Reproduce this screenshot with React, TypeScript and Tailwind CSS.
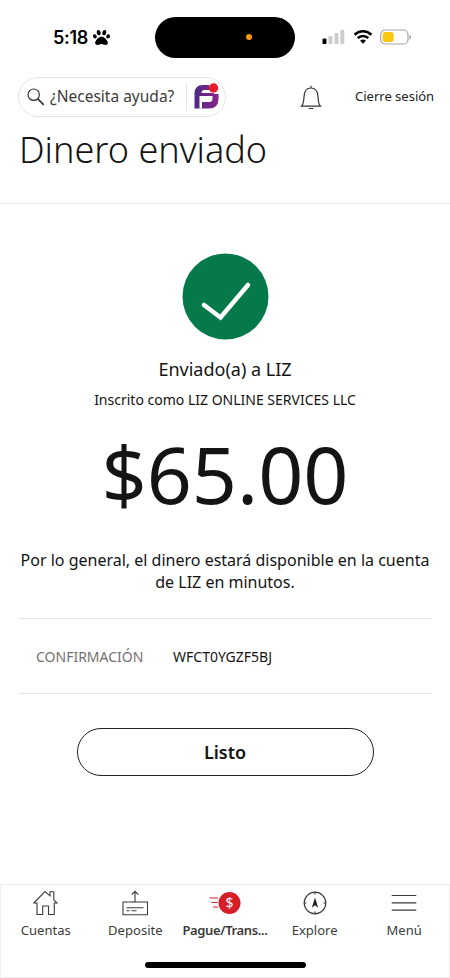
import React from "react";
import { FaPaw } from "react-icons/fa";

interface INavItem {
  label: string;
  icon: React.ReactNode;
  className: string;
}

const HomeIcon = () => (
  <svg width="26" height="26" viewBox="0 0 26 26" fill="none" stroke="#3b3b3b" strokeWidth="1.1">
    <path d="M4 13v11.5h5.700v-8.500h5.800v8.500h5.800v-11.500h2.700l-3.200-3.200v-8h-3.800v4l-5-4.300-11.200 11.500z" />
  </svg>
);

const DepositIcon = () => (
  <svg width="26" height="26" viewBox="0 0 26 26" fill="none" stroke="#3b3b3b" strokeWidth="1.1">
    <path d="M10.500 12h-9.500v12.700h24.500v-12.700h-9.500" />
    <path d="M10 12h6" />
    <path d="M13 12V1.500M9.700 4.700L13 1.300l3.300 3.400M4.500 17.700h17M4.500 20.800h3M9.500 20.800h5" />
  </svg>
);

const PayIcon = () => (
  <svg width="32" height="26" viewBox="0 0 32 26">
    <circle cx="20.500" cy="13" r="11" fill="#d71e28" />
    <path d="M0.500 8h8.500M2.500 12.500h6M4 17h5" stroke="#d71e28" strokeWidth="1.100" />
    <text x="20.500" y="18" fill="#fff" fontSize="14" textAnchor="middle" fontFamily="Noto Sans">$</text>
  </svg>
);

const CompassIcon = () => (
  <svg width="26" height="26" viewBox="0 0 26 26" fill="none" stroke="#3b3b3b" strokeWidth="1.200">
    <circle cx="13" cy="13" r="10.800" />
    <path d="M13 2v2.500M13 21.500V24M2 13h2.500M21.500 13H24" />
    <path d="M13 7.500l3.200 10.300-3.200-2.500-3.200 2.500z" fill="#222" stroke="none" />
  </svg>
);

const MenuIcon = () => (
  <svg width="26" height="26" viewBox="0 0 26 26" stroke="#3b3b3b" strokeWidth="1.200">
    <path d="M0.700 5.500h24.600M0.700 12.800h24.600M0.700 20.200h24.600" />
  </svg>
);

const navItems: INavItem[] = [
  { label: "Cuentas", icon: <HomeIcon />, className: "tracking-[0.05px]" },
  { label: "Deposite", icon: <DepositIcon />, className: "tracking-[0.05px]" },
  { label: "Pague/Trans...", icon: <PayIcon />, className: "font-semibold tracking-[-0.35px]" },
  { label: "Explore", icon: <CompassIcon />, className: "" },
  { label: "Menú", icon: <MenuIcon />, className: "" },
];

function StatusBar() {
  return (
    <div className="flex h-[74px] items-center pl-[53px]">
      <div className="flex w-[102px] items-center gap-[5px] font-['Inter',sans-serif] text-[18px] font-semibold tracking-[-0.3px] text-black">
        5:18
        <FaPaw size={17} />
      </div>
      <div className="flex h-[41px] w-[140px] items-center rounded-full bg-black pl-[91px]">
        <span className="size-[6px] rounded-full bg-[#f99a0c]" />
      </div>
      <div className="ml-[27px] flex items-center">
        <svg width="23" height="16" viewBox="0 0 23 16">
          <rect x="0.500" y="9.500" width="4" height="5.500" rx="1" fill="#000" />
          <rect x="6.500" y="7" width="4" height="8" rx="1" fill="#ccc" />
          <rect x="12.500" y="4" width="4" height="11" rx="1" fill="#ccc" />
          <rect x="18.300" y="1" width="4" height="14" rx="1" fill="#ccc" />
        </svg>
        <svg className="ml-[8px]" width="20" height="16" viewBox="0 0 20 16" fill="none" stroke="#000" strokeWidth="2.600">
          <path d="M1.600 5.700a12 12 0 0 1 16.800 0M4.700 9.100a7.600 7.600 0 0 1 10.600 0" />
          <path d="M10 14.800l-2.900-3a4.200 4.200 0 0 1 5.800 0z" fill="#000" stroke="none" />
        </svg>
        <svg className="ml-[7px]" width="32" height="16" viewBox="0 0 32 16">
          <rect x="0.700" y="1" width="27.300" height="14" rx="4.500" fill="#fff" stroke="#a5a5a5" strokeWidth="1.200" />
          <rect x="2.700" y="3" width="11" height="10" rx="2.700" fill="#f9c80e" />
          <path d="M29.500 6v4.500c2-.8 2-3.700 0-4.500z" fill="#999" />
        </svg>
      </div>
    </div>
  );
}

function FargoLogo() {
  return (
    <svg width="28" height="28" viewBox="0 0 28 28">
      <defs>
        <linearGradient id="fargo" x1="0" y1="0" x2="1" y2="0">
          <stop offset="0" stopColor="#4b2a84" />
          <stop offset="1" stopColor="#8b2389" />
        </linearGradient>
      </defs>
      <path
        d="M10 2h6v5h-4.500q-3 0-3 3h10.500q2 0 2.500 1h4v5q0 9.500-9.500 9.500h-14.500v-15q0-8.500 8.500-8.500z"
        fill="url(#fargo)"
      />
      <path d="M6.500 13h13v3q0 3-3.500 3h-7v6.500h-2.500z" fill="#fff" />
      <circle cx="20.500" cy="5" r="4.700" fill="#e51c2a" />
    </svg>
  );
}

function Header() {
  return (
    <header className="h-[130px] border-b border-[#e6e6e6] pt-[3px]">
      <div className="flex items-center">
        <div className="ml-[18px] flex h-[40px] w-[208px] shrink-0 items-center rounded-full border border-[#e4e4e4] pl-2">
          <svg width="18" height="18" viewBox="0 0 18 18" fill="none" stroke="#333" strokeWidth="1.200">
            <circle cx="6.700" cy="6.700" r="5.700" />
            <path d="M10.800 10.800l6 6" strokeWidth="1.700" />
          </svg>
          <span className="ml-[5px] w-[127px] whitespace-nowrap text-[15.500px] text-[#3b3b3b]">¿Necesita ayuda?</span>
          <span className="ml-[9px] mr-[6px] h-[27px] w-px bg-[#e4e4e4]" />
          <FargoLogo />
        </div>
        <svg className="ml-[74px] shrink-0" width="22" height="25" viewBox="0 0 22 25" fill="none" stroke="#333" strokeWidth="1.200">
          <path d="M1.500 21.200c2-2 2.300-4.500 2.500-9.200.2-5.500 2.500-9 7-9s6.800 3.500 7 9c.2 4.700.5 7.200 2.500 9.200zM11 3V0.800M8.700 23.500h4.600" />
        </svg>
        <span className="ml-[33px] whitespace-nowrap text-[13px] text-[#222]">Cierre sesión</span>
      </div>
      <h1 className="ml-[19px] mt-[8px] whitespace-nowrap text-[36px] font-light leading-[50px] text-[#141414]">
        Dinero enviado
      </h1>
    </header>
  );
}

function BottomNav() {
  return (
    <nav className="h-[94px] border border-[#eeeeee] px-0">
      <div className="grid grid-cols-5 pt-[5px]">
        {navItems.map((item) => (
          <div key={item.label} className="flex flex-col items-center text-[#3b3b3b]">
            {item.icon}
            <span className={`mt-[5px] whitespace-nowrap text-[13px] leading-[18px] ${item.className}`}>
              {item.label}
            </span>
          </div>
        ))}
      </div>
      <div className="mx-auto mt-[23px] h-[6px] w-[161px] rounded-full bg-black" />
    </nav>
  );
}

export default function App() {
  return (
    <div className="flex h-[978px] w-[450px] flex-col overflow-hidden bg-white font-['Noto_Sans',sans-serif] text-[#141414]">
      <StatusBar />
      <Header />

      <main className="flex flex-1 flex-col items-center">
        <svg className="mt-[49px]" width="87" height="87" viewBox="0 0 87 87" fill="none">
          <circle cx="43.500" cy="43.500" r="43" fill="#05794a" />
          <path d="M22 52l16.500 12.500L66 32" stroke="#fff" strokeWidth="4.500" strokeLinecap="round" strokeLinejoin="miter" />
        </svg>
        <p className="mt-[16px] whitespace-nowrap text-[18px] leading-[26px]">Enviado(a) a LIZ</p>
        <p className="mt-[8px] whitespace-nowrap text-[14px] leading-[20px]">Inscrito como LIZ ONLINE SERVICES LLC</p>
        <p className="mt-[20px] whitespace-nowrap text-[79px] leading-[88px]">$65.00</p>
        <p className="mt-[31px] whitespace-nowrap text-center text-[16px] leading-[22px]">
          Por lo general, el dinero estará disponible en la cuenta
          <br />
          de LIZ en minutos.
        </p>

        <div className="mt-[25px] flex h-[76px] w-[414px] items-center border-y border-[#e6e6e6] pl-[18px] text-[14px]">
          <span className="w-[137px] whitespace-nowrap text-[#787070]">CONFIRMACIÓN</span>
          <span className="whitespace-nowrap">WFCT0YGZF5BJ</span>
        </div>

        <button className="mt-[34px] h-[48px] w-[297px] rounded-full border border-[#222] text-[18px] font-semibold">
          Listo
        </button>
      </main>

      <BottomNav />
    </div>
  );
}
